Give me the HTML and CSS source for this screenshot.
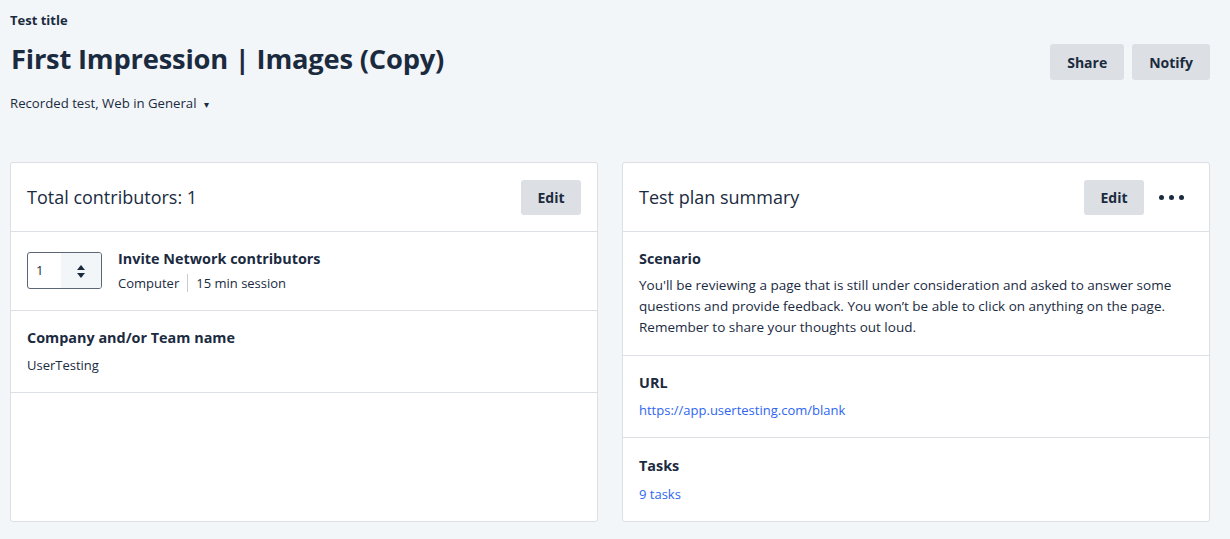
FILE: index.html
```html
<!DOCTYPE html>
<html lang="en">
<head>
    <meta charset="UTF-8">
    <meta name="viewport" content="width=device-width, initial-scale=1.0">
    <title>First Impression | Images (Copy)</title>
    <link rel="stylesheet" href="styles.css">
</head>
<body>
    <div class="page">
        <header class="page-header">
            <div class="header-text">
                <div class="eyebrow">Test title</div>
                <h1>First Impression | Images (Copy)</h1>
                <div class="meta">Recorded test, Web in General <span class="caret">&#9662;</span></div>
            </div>
            <div class="header-actions">
                <button class="btn">Share</button>
                <button class="btn">Notify</button>
            </div>
        </header>

        <div class="cards">
            <section class="card">
                <div class="card-head">
                    <h2>Total contributors: 1</h2>
                    <button class="btn btn-sm">Edit</button>
                </div>
                <div class="card-row row-flex">
                    <div class="stepper">
                        <span class="stepper-value">1</span>
                        <span class="stepper-arrows">
                            <svg width="10" height="20" viewBox="0 0 10 20">
                                <path d="M5 4 L9 9 L1 9 Z" fill="#1b2b3f"/>
                                <path d="M5 17 L9 12 L1 12 Z" fill="#1b2b3f"/>
                            </svg>
                        </span>
                    </div>
                    <div>
                        <h3>Invite Network contributors</h3>
                        <div class="sub"><span class="sep">Computer</span>15 min session</div>
                    </div>
                </div>
                <div class="card-row row-tall">
                    <h3>Company and/or Team name</h3>
                    <div class="sub">UserTesting</div>
                </div>
            </section>

            <section class="card">
                <div class="card-head">
                    <h2>Test plan summary</h2>
                    <div class="head-actions">
                        <button class="btn btn-sm">Edit</button>
                        <span class="dots"><i></i><i></i><i></i></span>
                    </div>
                </div>
                <div class="card-row row-text">
                    <h3>Scenario</h3>
                    <p class="body">You'll be reviewing a page that is still under consideration and asked to answer some questions and provide feedback. You won’t be able to click on anything on the page. Remember to share your thoughts out loud.</p>
                </div>
                <div class="card-row row-tall">
                    <h3>URL</h3>
                    <a class="link" href="#">https://app.usertesting.com/blank</a>
                </div>
                <div class="card-row last">
                    <h3>Tasks</h3>
                    <a class="link" href="#">9 tasks</a>
                </div>
            </section>
        </div>
    </div>
</body>
</html>
```

FILE: styles.css
```css
body {
    margin: 0;
    font-family: "Open Sans", Lato, sans-serif;
    background-color: #f3f6f8;
    color: #1b2b3f;
}
.page {
    padding: 10px 20px 0 10px;
}
.page-header {
    display: flex;
    justify-content: space-between;
    align-items: flex-start;
}
.eyebrow {
    font-size: 13px;
    font-weight: 700;
    line-height: 20px;
}
h1 {
    margin: 12px 0 0 1px;
    font-size: 27.3px;
    font-weight: 700;
    line-height: 34px;
    letter-spacing: -0.2px;
}
.meta {
    margin-top: 19px;
    font-size: 13.2px;
    line-height: 16px;
}
.caret {
    font-size: 10px;
    margin-left: 4px;
}
.header-actions {
    display: flex;
    gap: 8px;
    margin-top: 34px;
}
.btn {
    font-family: inherit;
    background-color: #dcdfe3;
    color: #1b2b3f;
    border: none;
    border-radius: 3px;
    font-size: 14px;
    font-weight: 700;
    height: 36px;
    padding: 0 17px;
    cursor: pointer;
}
.btn-sm {
    height: 35px;
    width: 60px;
    padding: 0;
}
.cards {
    display: grid;
    grid-template-columns: 1fr 1fr;
    gap: 24px;
    margin-top: 50px;
}
.card {
    background-color: #fff;
    border: 1px solid #dcdfe3;
    border-radius: 3px;
    height: 358px;
}
.card-head {
    display: flex;
    justify-content: space-between;
    align-items: center;
    height: 68px;
    padding: 0 16px;
    border-bottom: 1px solid #dcdfe3;
}
h2 {
    margin: 0;
    font-size: 18px;
    font-weight: 400;
}
.head-actions {
    display: flex;
    align-items: center;
    gap: 15px;
}
.dots {
    display: flex;
    gap: 5px;
    width: 26px;
    margin-right: 8px;
}
.dots i {
    width: 5px;
    height: 5px;
    border-radius: 50%;
    background-color: #1b2b3f;
}
.card-row {
    padding: 18px 16px 19px;
    border-bottom: 1px solid #dcdfe3;
}
.card-row.row-text {
    padding-bottom: 17px;
}
.card-row.last {
    border-bottom: none;
    padding-top: 19px;
}
.row-flex {
    display: flex;
    gap: 16px;
    align-items: flex-start;
}
h3 {
    margin: 0;
    font-size: 14.4px;
    font-weight: 700;
    line-height: 18px;
}
.sub {
    margin-top: 7px;
    font-size: 13px;
    line-height: 16px;
}
.row-tall .sub {
    margin-top: 10px;
}
.sep {
    border-right: 1px solid #c8ccd1;
    padding-right: 8px;
    margin-right: 8px;
}
.stepper {
    display: flex;
    width: 73px;
    height: 35px;
    border: 1px solid #5c6775;
    border-radius: 3px;
    overflow: hidden;
    margin-top: 2px;
}
.stepper-value {
    flex: 1;
    font-size: 13px;
    line-height: 35px;
    padding-left: 8px;
}
.stepper-arrows {
    width: 40px;
    background-color: #f3f6f8;
    display: flex;
    align-items: center;
    justify-content: center;
}
.body {
    margin: 7px 0 0;
    font-size: 13.5px;
    line-height: 21px;
}
.link {
    display: block;
    margin-top: 11px;
    font-size: 13px;
    line-height: 16px;
    color: #2e66f0;
    text-decoration: none;
}
.row-tall .link {
    margin-top: 10px;
}
```
